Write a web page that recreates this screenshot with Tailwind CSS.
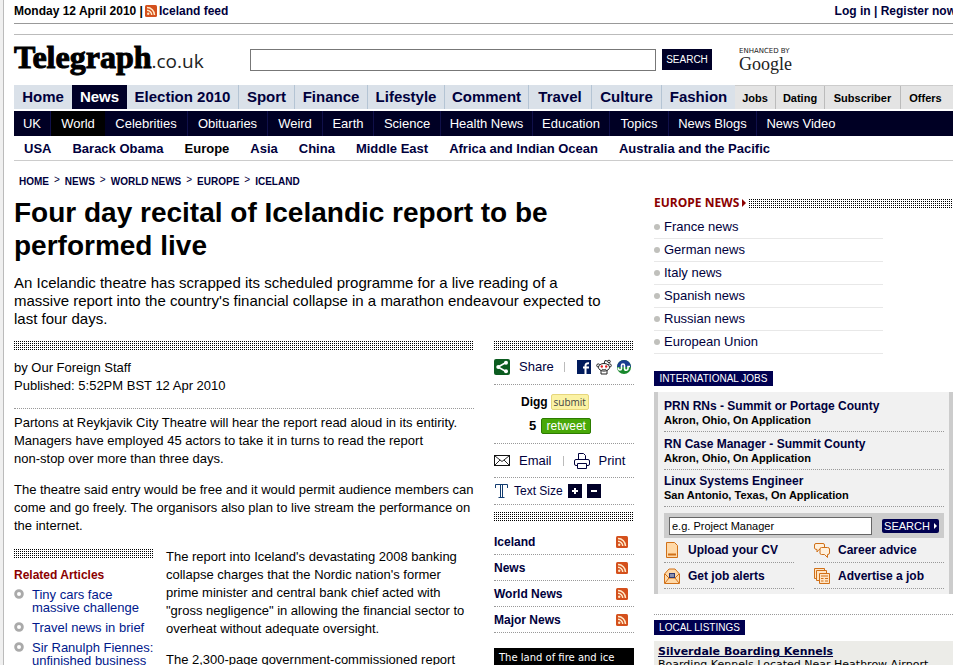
<!DOCTYPE html>
<html lang="en-GB">
<head>
  <meta charset="UTF-8" />
  <meta name="viewport" content="width=device-width, initial-scale=1.0"/>
  <title>Four day recital of Icelandic report to be performed live - Telegraph</title>
  <script src="https://cdn.jsdelivr.net/npm/@tailwindcss/browser@4"></script>
</head>
<body class="bg-[#f0f0f0] pl-[3px] font-['Liberation_Sans',Arial,sans-serif] text-[13px] leading-[18px] text-black">
  <!-- shared icons -->
  <svg class="hidden">
    <symbol id="rss" viewBox="0 0 12 12">
      <rect width="12" height="12" rx="1.5" fill="#d4501c"/>
      <path d="M2 2.5a7.5 7.5 0 0 1 7.5 7.5M2 5.3A4.7 4.7 0 0 1 6.7 10" fill="none" stroke="#ffe9c8" stroke-width="1.5"/>
      <circle cx="3.2" cy="8.8" r="1.2" fill="#ffe9c8"/>
    </symbol>
    <symbol id="ring" viewBox="0 0 10 10">
      <circle cx="5" cy="5" r="3.4" fill="#fff" stroke="#aaa" stroke-width="2.8"/>
    </symbol>
  </svg>

  <div class="h-screen overflow-hidden whitespace-nowrap border-l border-[#bbb] bg-white pl-[10px]">
    <!-- top bar -->
    <div class="flex h-6 items-center justify-between border-b border-[#999] pb-[2px] text-[12px] font-bold">
      <div class="flex items-center gap-[2px]">
        <span>Monday 12 April 2010 |</span>
        <svg class="size-3"><use href="#rss"/></svg>
        <a href="#" class="text-[#00003c]">Iceland feed</a>
      </div>
      <div class="-mr-[3px] text-[#00003c]"><a href="#">Log in</a> | <a href="#">Register now</a></div>
    </div>

    <header class="mt-[10px] flex h-[51px] items-start border-t border-[#bbb]">
      <a href="#" class="mt-1 flex w-[236px] items-baseline leading-[36px]">
        <span class="font-['Liberation_Serif',serif] text-[32px] font-bold [-webkit-text-stroke:1px_black]">Telegraph</span>
        <span class="font-['Open_Sans',sans-serif] text-[19px] text-[#222]">.co.uk</span>
      </a>
      <form class="mt-[14px] flex">
        <input type="text" aria-label="Search" class="h-[22px] w-[406px] border border-[#777] px-1"/>
        <button type="button" class="ml-[6px] h-[21px] w-[50px] bg-[#000028] text-[10px] text-white">SEARCH</button>
      </form>
      <div class="ml-[27px] mt-[12px] text-[#222]">
        <div class="font-['DejaVu_Sans',sans-serif] text-[7px] leading-[8px]">ENHANCED BY</div>
        <div class="font-['Liberation_Serif',serif] text-[18px] leading-[18px]">Google</div>
      </div>
    </header>

    <nav>
      <div class="flex h-6 text-center text-[15px] font-bold leading-6 text-[#00003c]">
        <a href="#" class="w-[58px] shrink-0 bg-[#dae1e9]">Home</a>
        <a href="#" class="w-[55px] shrink-0 bg-[#000028] text-white">News</a>
        <a href="#" class="w-[112px] shrink-0 border-r border-[#b4c4d4] bg-[#dae1e9]">Election 2010</a>
        <a href="#" class="w-[56px] shrink-0 border-r border-[#b4c4d4] bg-[#dae1e9]">Sport</a>
        <a href="#" class="w-[73px] shrink-0 border-r border-[#b4c4d4] bg-[#dae1e9]">Finance</a>
        <a href="#" class="w-[77px] shrink-0 border-r border-[#b4c4d4] bg-[#dae1e9]">Lifestyle</a>
        <a href="#" class="w-[84px] shrink-0 border-r border-[#b4c4d4] bg-[#dae1e9]">Comment</a>
        <a href="#" class="w-[63px] shrink-0 border-r border-[#b4c4d4] bg-[#dae1e9]">Travel</a>
        <a href="#" class="w-[70px] shrink-0 border-r border-[#b4c4d4] bg-[#dae1e9]">Culture</a>
        <a href="#" class="w-[73px] shrink-0 bg-[#dae1e9]">Fashion</a>
        <div class="flex grow border-t border-[#ccc] bg-[#e4e4e4] text-[11px] text-black">
          <a href="#" class="w-[41px] shrink-0 border-r border-[#bbb]">Jobs</a>
          <a href="#" class="w-[49px] shrink-0 border-r border-[#bbb]">Dating</a>
          <a href="#" class="w-[76px] shrink-0 border-r border-[#bbb]">Subscriber</a>
          <a href="#" class="w-[49px] shrink-0">Offers</a>
        </div>
      </div>
      <div class="mt-[2px] flex h-[25px] bg-[#000024] text-center leading-[26px] text-white">
        <a href="#" class="w-[37px] shrink-0 border-r border-[#10104a]">UK</a>
        <a href="#" class="w-[54px] shrink-0 bg-black">World</a>
        <a href="#" class="w-[83px] shrink-0 border-r border-[#10104a]">Celebrities</a>
        <a href="#" class="w-[80px] shrink-0 border-r border-[#10104a]">Obituaries</a>
        <a href="#" class="w-[55px] shrink-0 border-r border-[#10104a]">Weird</a>
        <a href="#" class="w-[51px] shrink-0 border-r border-[#10104a]">Earth</a>
        <a href="#" class="w-[67px] shrink-0 border-r border-[#10104a]">Science</a>
        <a href="#" class="w-[92px] shrink-0 border-r border-[#10104a]">Health News</a>
        <a href="#" class="w-[77px] shrink-0 border-r border-[#10104a]">Education</a>
        <a href="#" class="w-[59px] shrink-0 border-r border-[#10104a]">Topics</a>
        <a href="#" class="w-[88px] shrink-0 border-r border-[#10104a]">News Blogs</a>
        <a href="#" class="w-[88px] shrink-0">News Video</a>
      </div>
      <div class="flex h-[25px] gap-[21px] border-b border-[#ccc] pl-[10px] font-bold leading-[26px] text-[#00003c]">
        <a href="#">USA</a>
        <a href="#">Barack Obama</a>
        <a href="#" class="text-black">Europe</a>
        <a href="#">Asia</a>
        <a href="#">China</a>
        <a href="#">Middle East</a>
        <a href="#">Africa and Indian Ocean</a>
        <a href="#">Australia and the Pacific</a>
      </div>
    </nav>

    <div class="mt-[14px] flex gap-[5px] pl-[5px] text-[10px] font-bold leading-[14px] text-[#00003c]">
      <a href="#">HOME</a><span class="-mt-[2px] font-normal">&gt;</span>
      <a href="#">NEWS</a><span class="-mt-[2px] font-normal">&gt;</span>
      <a href="#">WORLD NEWS</a><span class="-mt-[2px] font-normal">&gt;</span>
      <a href="#">EUROPE</a><span class="-mt-[2px] font-normal">&gt;</span>
      <a href="#">ICELAND</a>
    </div>

    <div class="mt-[7px] flex gap-5">
      <main class="w-[620px] shrink-0">
        <h1 class="text-[28px] font-bold leading-[33px]">Four day recital of Icelandic report to be<br/>performed live</h1>
        <p class="mt-[12px] text-[15px] leading-[18px]">An Icelandic theatre has scrapped its scheduled programme for a live reading of a<br/>massive report into the country's financial collapse in a marathon endeavour expected to<br/>last four days.</p>

        <div class="mt-[13px] flex gap-5">
          <article class="w-[460px] shrink-0">
            <div class="h-[9px] bg-[conic-gradient(#fff_75%,#000_0)] bg-[length:2px_2px]"></div>
            <div class="mt-[9px] border-b border-dotted border-[#999] pb-[13px]">
              by Our Foreign Staff<br/>Published: 5:52PM BST 12 Apr 2010
            </div>
            <p class="mt-[5px]">Partons at Reykjavik City Theatre will hear the report read aloud in its entirity.<br/>Managers have employed 45 actors to take it in turns to read the report<br/>non-stop over more than three days.</p>
            <p class="mt-[13px]">The theatre said entry would be free and it would permit audience members can<br/>come and go freely. The organisors also plan to live stream the performance on<br/>the internet.</p>
            <div class="mt-[13px] flex gap-3">
              <aside class="w-[140px] shrink-0">
                <div class="mt-[1px] h-[9px] bg-[conic-gradient(#fff_75%,#000_0)] bg-[length:2px_2px]"></div>
                <h2 class="mt-2 text-[12px] font-bold text-[#8b0000]">Related Articles</h2>
                <ul class="mt-1 flex flex-col gap-[7px] leading-[13px] text-[#00188c]">
                  <li class="flex gap-2"><svg class="size-[10px] shrink-0 mt-[1px]"><use href="#ring"/></svg><a href="#">Tiny cars face<br/>massive challenge</a></li>
                  <li class="flex gap-2"><svg class="size-[10px] shrink-0 mt-[1px]"><use href="#ring"/></svg><a href="#">Travel news in brief</a></li>
                  <li class="flex gap-2"><svg class="size-[10px] shrink-0 mt-[1px]"><use href="#ring"/></svg><a href="#">Sir Ranulph Fiennes:<br/>unfinished business</a></li>
                </ul>
              </aside>
              <div>
                <p>The report into Iceland's devastating 2008 banking<br/>collapse charges that the Nordic nation's former<br/>prime minister and central bank chief acted with<br/>"gross negligence" in allowing the financial sector to<br/>overheat without adequate oversight.</p>
                <p class="mt-[13px]">The 2,300-page government-commissioned report</p>
              </div>
            </div>
          </article>

          <!-- share tools -->
          <aside class="w-[140px] shrink-0">
            <div class="h-[9px] bg-[conic-gradient(#fff_75%,#000_0)] bg-[length:2px_2px]"></div>
            <div class="flex h-[35px] items-center border-b border-dotted border-[#999] text-[#00003c]">
              <svg class="size-4" viewBox="0 0 16 16"><rect width="16" height="16" rx="2" fill="#0c5c20"/><path d="M12 3.5L4 8l8 4.5" fill="none" stroke="#fff" stroke-width="1.6"/><g fill="#fff"><circle cx="12" cy="3.8" r="2"/><circle cx="4.3" cy="8" r="2"/><circle cx="12" cy="12.2" r="2"/></g></svg>
              <a href="#" class="ml-[9px]">Share</a>
              <span class="ml-[10px] mr-3 h-[10px] w-px bg-[#bbb]"></span>
              <svg class="size-[14px]" viewBox="0 0 14 14"><rect width="14" height="14" fill="#001a5c"/><path d="M8.5 14V6c0-2 1-3 3.500-2.800M6 7.500h6" fill="none" stroke="#fff" stroke-width="2"/></svg>
              <svg class="ml-[5px] size-4" viewBox="0 0 16 16"><g stroke="#222" fill="#fff"><path d="M8 5l1-3.500 3.500.8" fill="none"/><circle cx="13" cy="2.500" r="1.300"/><circle cx="2.300" cy="6.500" r="1.600"/><circle cx="13.700" cy="6.500" r="1.600"/><path d="M5 11v4h6v-4"/><ellipse cx="8" cy="8.300" rx="5.500" ry="3.800"/></g><circle cx="5.800" cy="7.500" r="1.200" fill="#e02020"/><circle cx="10.200" cy="7.500" r="1.200" fill="#e02020"/><path d="M5.800 10.200q2.200 1.200 4.400 0" fill="none" stroke="#222" stroke-width=".8"/></svg>
              <svg class="ml-[5px] size-[14px]" viewBox="0 0 14 14"><circle cx="7" cy="7" r="7" fill="#18882c"/><path d="M0 7a7 7 0 0 1 14 0z" fill="#1a3c90"/><path d="M1.500 7.500v1a1.500 1.500 0 0 0 3 0V5.500a1.500 1.500 0 0 1 3 0v3a1.700 1.700 0 0 0 3.500 0V6.500h2" fill="none" stroke="#fff" stroke-width="1.600"/></svg>
            </div>
            <div class="flex h-[59px] flex-col gap-2 border-b border-dotted border-[#999] pt-[9px] leading-4">
              <div class="flex gap-[3px] pl-[27px] text-[12px] font-bold">
                Digg <button type="button" class="h-4 w-[38px] rounded-xs border border-[#e6d67c] bg-[#fbf2a4] font-['Open_Sans',sans-serif] text-[10px] font-normal leading-[14px] text-[#444]">submit</button>
              </div>
              <div class="flex gap-[5px] pl-[35px] font-bold">
                5 <button type="button" class="h-4 w-[50px] rounded-xs border border-[#2c7c00] bg-[#48a808] text-[12px] font-normal leading-[14px] text-white">retweet</button>
              </div>
            </div>
            <div class="flex h-[34px] items-center border-b border-dotted border-[#999] text-[#00003c]">
              <svg class="h-[11px] w-4" viewBox="0 0 16 11"><rect x=".5" y=".5" width="15" height="10" fill="#fff" stroke="#111"/><path d="M1 1l7 5.500L15 1M1 10l5-5M15 10l-5-5" fill="none" stroke="#111" stroke-width=".9"/></svg>
              <a href="#" class="ml-[9px]">Email</a>
              <span class="ml-[11px] mr-[10px] h-[10px] w-px bg-[#bbb]"></span>
              <svg class="size-4" viewBox="0 0 16 16"><g fill="#fff" stroke="#00003c"><path d="M4.500 7V.5h5l2 2V7"/><rect x=".5" y="6.500" width="15" height="6" rx="1.500"/><path d="M3.500 10.500h9v5h-9z"/></g></svg>
              <a href="#" class="ml-[9px]">Print</a>
            </div>
            <div class="flex h-[27px] items-center border-b border-dotted border-[#999] text-[12px] text-[#00003c]">
              <svg class="ml-[1px] h-[14px] w-[13px]" viewBox="0 0 13 14"><path d="M.5 4V.5h12V4M5.500 .5v13M7.500 .5v13M3.500 13.500h6" fill="none" stroke="#123c70"/></svg>
              <span class="ml-[6px]">Text Size</span>
              <button type="button" aria-label="Larger text" class="ml-[5px] size-[14px] bg-[#000028] text-white"><svg viewBox="0 0 14 14"><path d="M4 7h6M7 4v6" stroke="currentColor" stroke-width="2"/></svg></button>
              <button type="button" aria-label="Smaller text" class="ml-[5px] size-[14px] bg-[#000028] text-white"><svg viewBox="0 0 14 14"><path d="M4 7h6" stroke="currentColor" stroke-width="2"/></svg></button>
            </div>
            <div class="mt-[7px] h-[9px] bg-[conic-gradient(#fff_75%,#000_0)] bg-[length:2px_2px]"></div>
            <ul class="mt-2 text-[12px] font-bold text-[#00003c]">
              <li class="flex h-[26px] items-center justify-between border-b border-dotted border-[#999] pr-[6px]"><a href="#">Iceland</a><svg class="size-3"><use href="#rss"/></svg></li>
              <li class="flex h-[26px] items-center justify-between border-b border-dotted border-[#999] pr-[6px]"><a href="#">News</a><svg class="size-3"><use href="#rss"/></svg></li>
              <li class="flex h-[26px] items-center justify-between border-b border-dotted border-[#999] pr-[6px]"><a href="#">World News</a><svg class="size-3"><use href="#rss"/></svg></li>
              <li class="flex h-[26px] items-center justify-between border-b border-dotted border-[#999] pr-[6px]"><a href="#">Major News</a><svg class="size-3"><use href="#rss"/></svg></li>
            </ul>
            <div class="mt-[15px] h-8 bg-black px-[5px] font-['DejaVu_Sans',sans-serif] text-[10px] leading-5 text-white">The land of fire and ice</div>
          </aside>
        </div>
      </main>

      <aside class="min-w-0 grow">
        <div class="flex h-[14px] items-center">
          <h2 class="font-['Open_Sans',sans-serif] text-[12px] font-bold leading-[14px] text-[#8b0000]">EUROPE NEWS</h2>
          <svg class="ml-[3px] mr-[3px] h-2 w-1" viewBox="0 0 4 8"><path d="M0 0l4 4-4 4z" fill="#8b0000"/></svg>
          <div class="h-[9px] grow bg-[conic-gradient(#fff_75%,#000_0)] bg-[length:2px_2px]"></div>
        </div>
        <ul class="mt-[6px] w-[229px] text-[#00003c]">
          <li class="flex h-[23px] items-center gap-1 border-b border-[#e8e8e8]"><span class="size-[6px] rounded-full bg-[#c0c0bc]"></span><a href="#">France news</a></li>
          <li class="flex h-[23px] items-center gap-1 border-b border-[#e8e8e8]"><span class="size-[6px] rounded-full bg-[#c0c0bc]"></span><a href="#">German news</a></li>
          <li class="flex h-[23px] items-center gap-1 border-b border-[#e8e8e8]"><span class="size-[6px] rounded-full bg-[#c0c0bc]"></span><a href="#">Italy news</a></li>
          <li class="flex h-[23px] items-center gap-1 border-b border-[#e8e8e8]"><span class="size-[6px] rounded-full bg-[#c0c0bc]"></span><a href="#">Spanish news</a></li>
          <li class="flex h-[23px] items-center gap-1 border-b border-[#e8e8e8]"><span class="size-[6px] rounded-full bg-[#c0c0bc]"></span><a href="#">Russian news</a></li>
          <li class="flex h-[23px] items-center gap-1 border-b border-[#e8e8e8]"><span class="size-[6px] rounded-full bg-[#c0c0bc]"></span><a href="#">European Union</a></li>
        </ul>

        <h2 class="mt-[17px] w-[119px] bg-[#000050] text-center text-[10px] leading-[15px] text-white">INTERNATIONAL JOBS</h2>
        <section class="mt-[6px] border-x-4 border-[#ccc] bg-[#f1f1f1] pb-[5px] pl-[6px] pr-[5px]">
          <ul class="text-[11px] font-bold leading-[14px]">
            <li class="h-10 border-b border-dotted border-[#999] pt-[7px]"><a href="#" class="text-[12px] text-[#00003c]">PRN RNs - Summit or Portage County</a><br/>Akron, Ohio, On Application</li>
            <li class="h-[38px] border-b border-dotted border-[#999] pt-[5px]"><a href="#" class="text-[12px] text-[#00003c]">RN Case Manager - Summit County</a><br/>Akron, Ohio, On Application</li>
            <li class="h-[37px] border-b border-dotted border-[#999] pt-[4px]"><a href="#" class="text-[12px] text-[#00003c]">Linux Systems Engineer</a><br/>San Antonio, Texas, On Application</li>
          </ul>
          <form class="mt-[6px] flex h-[25px] items-center bg-[#ccc] px-[5px]">
            <input type="text" aria-label="Job title" value="e.g. Project Manager" class="h-[18px] min-w-0 grow border border-[#666] bg-white px-[2px] text-[11px]"/>
            <button type="button" class="ml-[10px] flex h-[14px] w-[57px] items-center justify-center gap-1 rounded-xs bg-[#000050] text-[11px] text-white">SEARCH
              <svg class="h-[6px] w-[3px]" viewBox="0 0 3 6"><path d="M0 0l3 3-3 3z" fill="#fff"/></svg></button>
          </form>
          <div class="grid grid-cols-2 gap-x-5 text-[12px] font-bold text-[#00003c]">
            <a href="#" class="flex h-[25px] items-center gap-2 border-b border-dotted border-[#999]"><svg class="size-4" viewBox="0 0 16 16"><path d="M2.500.5h8l3 3v12h-11z" fill="#ffd9a8" stroke="#d07018"/><path d="M4 12.500h8" stroke="#d07018" stroke-width="2"/></svg>Upload your CV</a>
            <a href="#" class="flex h-[25px] items-center gap-2 border-b border-dotted border-[#999]"><svg class="size-4" viewBox="0 0 16 16"><g fill="#fff0dc" stroke="#d07018"><path d="M2 1.500h7q1.500 0 1.500 1.500v3q0 1.500-1.500 1.500H5L3 10V7.500Q.5 7.500.5 6V3Q.5 1.500 2 1.500z"/><path d="M7.500 5.500h6q2 0 2 1.500v4q0 1.500-2 1.500v3l-3-3h-3Q6 12.500 6 11V7q0-1.500 1.500-1.500z"/></g></svg>Career advice</a>
            <a href="#" class="flex h-[26px] items-center gap-2 border-b border-dotted border-[#999]"><svg class="size-4" viewBox="0 0 16 16"><path d="M.5 6L5 1h6l4.500 5v9.500H.5z" fill="#ffd9a8" stroke="#d07018"/><path d="M1 6l4 4h6l4-4M1 15l4-5M15 15l-4-5" fill="none" stroke="#d07018"/><rect x="5.500" y="5.500" width="5" height="4" fill="#8890b0" stroke="#303870"/></svg>Get job alerts</a>
            <a href="#" class="flex h-[26px] items-center gap-2 border-b border-dotted border-[#999]"><svg class="size-4" viewBox="0 0 16 16"><g fill="#ffe4c4" stroke="#d07018"><path d="M.5.5h10v10H.5z"/><path d="M2.500 2.500h10v10h-10z"/><path d="M5.500 5.500h10v10h-10z"/><path d="M7 8h7M7 10.500h2.500M11 10.500h3M7 13h2.500M11 13h3"/></g></svg>Advertise a job</a>
          </div>
        </section>

        <h2 class="mt-5 border-t border-dotted border-[#999] pt-[5px] text-[10px] leading-[15px] text-white"><span class="block w-[91px] bg-[#000050] text-center">LOCAL LISTINGS</span></h2>
        <div class="mt-[6px] bg-[#ecece8] px-1 pt-1 font-['DejaVu_Sans',Verdana,sans-serif] text-[11px] leading-[13px]">
          <a href="#" class="font-bold text-[#00003c] underline">Silverdale Boarding Kennels</a><br/>
          Boarding Kennels Located Near Heathrow Airport
        </div>
      </aside>
    </div>
  </div>
</body>
</html>
